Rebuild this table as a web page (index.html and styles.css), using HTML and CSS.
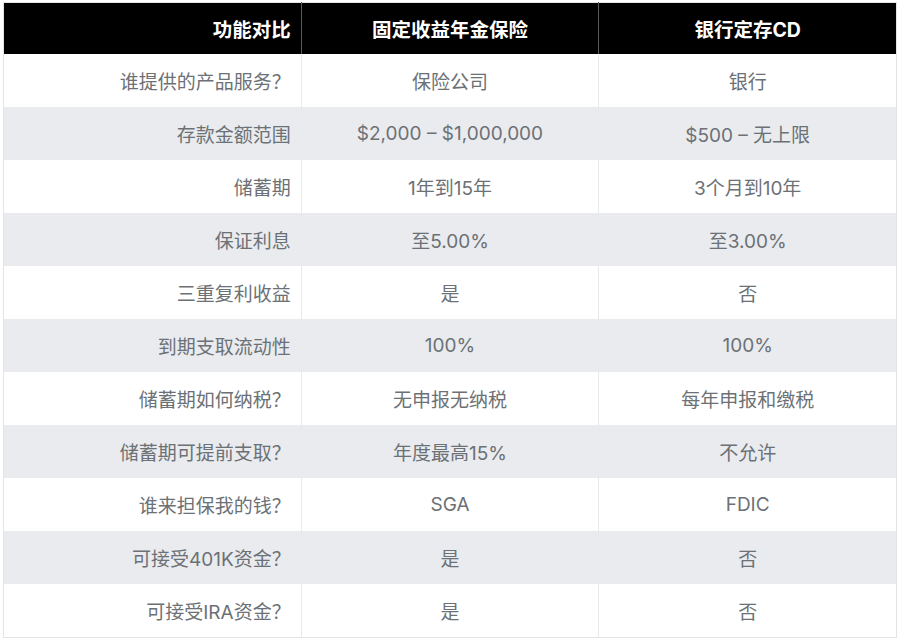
FILE: index.html
```html
<!DOCTYPE html>
<html lang="zh-CN">
<head>
<meta charset="utf-8">
<title>功能对比</title>
<link rel="stylesheet" href="styles.css">
</head>
<body>
<div class="page">
<table class="compare">
  <thead>
    <tr>
      <th class="label">功能对比</th>
      <th>固定收益年金保险</th>
      <th>银行定存CD</th>
    </tr>
  </thead>
  <tbody>
    <tr><td class="label">谁提供的产品服务？</td><td>保险公司</td><td>银行</td></tr>
    <tr><td class="label">存款金额范围</td><td>$2,000 – $1,000,000</td><td>$500 – 无上限</td></tr>
    <tr><td class="label">储蓄期</td><td>1年到15年</td><td>3个月到10年</td></tr>
    <tr><td class="label">保证利息</td><td>至5.00%</td><td>至3.00%</td></tr>
    <tr><td class="label">三重复利收益</td><td>是</td><td>否</td></tr>
    <tr><td class="label">到期支取流动性</td><td>100%</td><td>100%</td></tr>
    <tr><td class="label">储蓄期如何纳税？</td><td>无申报无纳税</td><td>每年申报和缴税</td></tr>
    <tr><td class="label">储蓄期可提前支取？</td><td>年度最高15%</td><td>不允许</td></tr>
    <tr><td class="label">谁来担保我的钱？</td><td>SGA</td><td>FDIC</td></tr>
    <tr><td class="label">可接受401K资金？</td><td>是</td><td>否</td></tr>
    <tr><td class="label">可接受IRA资金？</td><td>是</td><td>否</td></tr>
  </tbody>
</table>
</div>
</body>
</html>
```
FILE: styles.css
```css
html, body {
  margin: 0;
  padding: 0;
  background: #ffffff;
}
.page {
  padding: 2px 3px 0 3px;
}
.compare {
  width: 894px;
  height: 636px;
  border-collapse: collapse;
  table-layout: fixed;
  border: 1px solid #e3e4e6;
  font-family: Inter, "Noto Sans CJK SC", sans-serif;
  font-size: 19px;
}
.compare th,
.compare td {
  text-align: center;
  vertical-align: middle;
  padding: 0 10px;
  border-left: 1px solid #e8e9eb;
  white-space: nowrap;
}
.compare th:first-child,
.compare td:first-child {
  border-left: none;
}
.compare thead tr {
  height: 51px;
}
.compare th {
  background: #000000;
  color: #ffffff;
  font-weight: bold;
  font-size: 19.5px;
  border-left-color: #5a5a5a;
}
.compare td {
  color: #6c7176;
}
.compare tbody tr:nth-child(even) td {
  background: #e9ebee;
}
.compare .label {
  text-align: right;
  padding-right: 10px;
}
```
